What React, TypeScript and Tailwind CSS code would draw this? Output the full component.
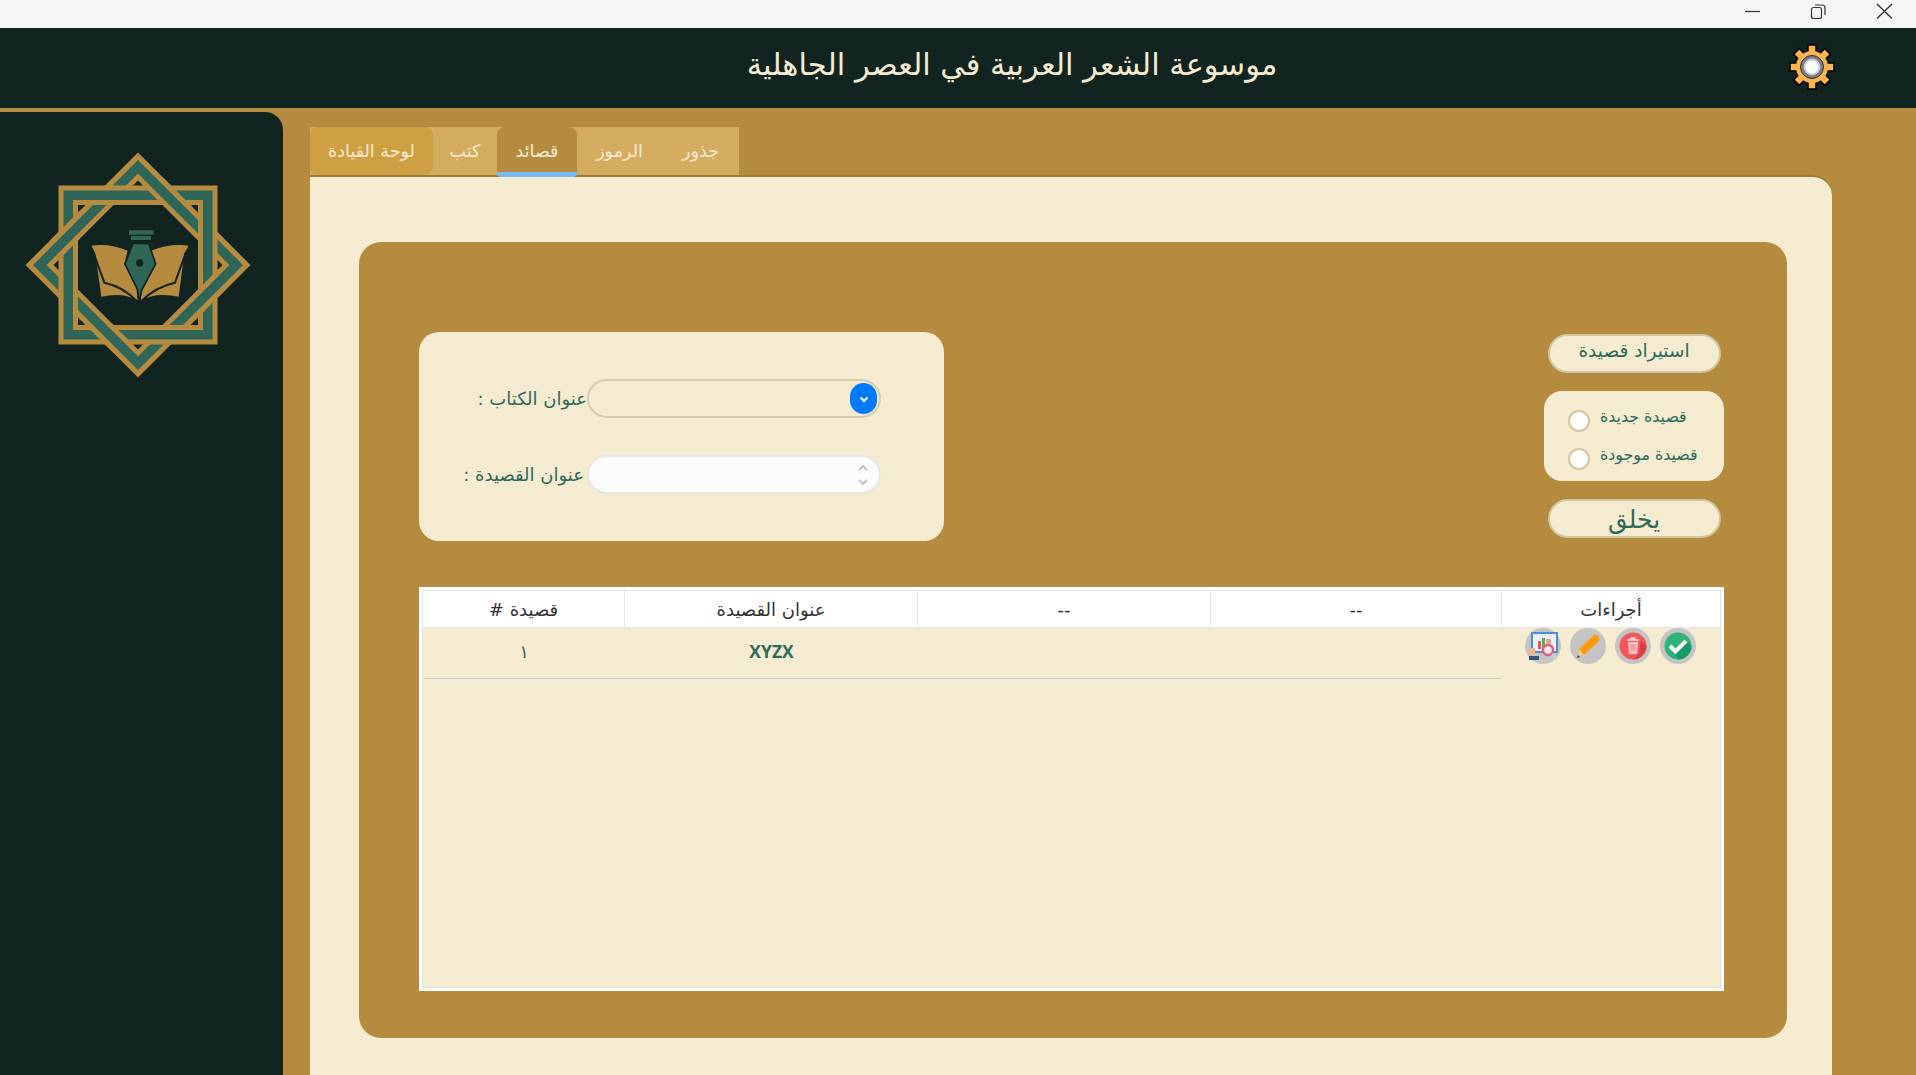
import React from "react";

const arabicFont = { fontFamily: '"DejaVu Sans", sans-serif' };

function WindowControls() {
  return (
    <div className="h-[28px] bg-[#f5f5f5] flex justify-end shrink-0">
      <svg width="176" height="28" viewBox="0 0 176 28" fill="none" stroke="#333" strokeWidth="1.2">
        <path d="M5 11.5 H20" />
        <rect x="71.5" y="7.5" width="10" height="11" rx="2" />
        <path d="M75 5 H82 Q85 5 85 8 V15" />
        <path d="M137 4 L152 18.5 M152 4 L137 18.5" strokeWidth="1.4" />
      </svg>
    </div>
  );
}

function Gear() {
  const teeth = [0, 45, 90, 135, 180, 225, 270, 315];
  return (
    <svg width="48" height="48" viewBox="-24 -24 48 48">
      {teeth.map((a) => (
        <rect key={a} x="-4" y="-22" width="8" height="12" fill="#fdb44e" stroke="#000" strokeWidth="1.5" transform={`rotate(${a})`} />
      ))}
      <circle r="16" fill="#fdb44e" />
      <circle r="11.5" fill="#777b84" stroke="#333" strokeWidth="1" />
      <circle r="8.5" fill="#c9ccd2" />
      <circle r="6.5" fill="#fff" />
    </svg>
  );
}

function Logo() {
  const gold = "#b58b40";
  const teal = "#2f6658";
  const square = (o: number, i: number) =>
    `M${-o} ${-o} H${o} V${o} H${-o} Z M${-i} ${-i} H${i} V${i} H${-i} Z`;
  const diamond = (o: number, i: number) =>
    `M0 ${-o} L${o} 0 L0 ${o} L${-o} 0 Z M0 ${-i} L${i} 0 L0 ${i} L${-i} 0 Z`;
  const Sq = () => (
    <>
      <path d={square(79.5, 60)} fill={gold} fillRule="evenodd" />
      <path d={square(74.5, 65)} fill={teal} fillRule="evenodd" />
    </>
  );
  const Di = () => (
    <>
      <path d={diamond(112.5, 84.5)} fill={gold} fillRule="evenodd" />
      <path d={diamond(105, 91.5)} fill={teal} fillRule="evenodd" />
    </>
  );
  return (
    <svg width="240" height="240" viewBox="-120 -120 240 240">
      <defs>
        <clipPath id="over">
          <rect x="4" y="-88" width="52" height="30" />
          <rect x="58" y="4" width="30" height="52" />
          <rect x="-56" y="58" width="52" height="30" />
          <rect x="-88" y="-56" width="30" height="52" />
        </clipPath>
      </defs>
      <Di />
      <Sq />
      <g clipPath="url(#over)">
        <Di />
      </g>
      <g transform="scale(0.3333) translate(-413 -525)">
        <path d="M273 467 Q330 460 382 482 L372 522 L408 590 L412 632 Q370 605 303 620 L285 490 Z" fill={gold} />
        <path d="M565 467 Q505 460 452 482 L465 522 L428 590 L420 632 Q465 605 535 620 L552 490 Z" fill={gold} />
        <path d="M280 490 L312 578 Q370 590 412 636" fill="none" stroke="#12241f" strokeWidth="6" />
        <path d="M556 490 L524 578 Q465 590 420 636" fill="none" stroke="#12241f" strokeWidth="6" />
        <rect x="386" y="421" width="74" height="13" fill={teal} />
        <rect x="392" y="438" width="60" height="12" fill={teal} />
        <path d="M398 460 H445 L466 522 L424 600 L416 640 L412 600 L374 522 Z" fill={teal} stroke="#12241f" strokeWidth="5" />
        <circle cx="418" cy="519" r="11" fill="#12241f" />
      </g>
    </svg>
  );
}

function ChartIcon() {
  return (
    <svg width="36" height="36" viewBox="0 0 36 36">
      <circle cx="18" cy="18" r="18" fill="#c4c4c4" />
      <rect x="7" y="5" width="25" height="19" fill="#e9eef3" stroke="#4a90d0" strokeWidth="2" />
      <rect x="13" y="13" width="3" height="8" fill="#e0584f" />
      <rect x="17" y="10" width="3" height="11" fill="#5aa85a" />
      <rect x="21" y="11" width="5" height="6" fill="#f0a090" />
      <path d="M4 20 H10 V27 H4 Z" fill="#f0b58a" />
      <rect x="4" y="28" width="10" height="4" fill="#2e5a78" />
      <circle cx="23" cy="22" r="5" fill="#f3e9e9" stroke="#e0607a" strokeWidth="2.5" />
      <path d="M27 26 L32 31" stroke="#c9d4dc" strokeWidth="2" />
    </svg>
  );
}

function PencilIcon() {
  return (
    <svg width="36" height="36" viewBox="0 0 36 36">
      <circle cx="18" cy="18" r="18" fill="#c4c4c4" />
      <path d="M9 21 L24 7 Q26 6 28 8 L29 10 Q30 12 29 13 L14 27 Z" fill="#fb9a0e" />
      <path d="M9 21 L14 27 L7 30 Z" fill="#e8c98c" />
      <path d="M7 30 L8 27 L10 29 Z" fill="#333" />
    </svg>
  );
}

function TrashIcon() {
  return (
    <svg width="36" height="36" viewBox="0 0 36 36">
      <circle cx="18" cy="18" r="18" fill="#c4c4c4" />
      <circle cx="18" cy="18" r="13.5" fill="#f4555a" />
      <path d="M18 31.5 A13.5 13.5 0 0 0 31.5 18 L26 12 L24 26 Z" fill="#d93f44" />
      <path d="M12 11 H24 V13 H12 Z M15.5 9 H20.5 V11 H15.5 Z" fill="#f8c4c5" />
      <path d="M13 14 H23 L22 26 H14 Z" fill="#f8c4c5" />
      <rect x="15" y="16" width="6" height="7" fill="#f4a0a3" />
    </svg>
  );
}

function CheckIcon() {
  return (
    <svg width="36" height="36" viewBox="0 0 36 36">
      <circle cx="18" cy="18" r="18" fill="#c4c4c4" />
      <circle cx="18" cy="18" r="13.5" fill="#2fb478" />
      <path d="M18 31.5 A13.5 13.5 0 0 0 31.5 18 L26 12 L14 24 Z" fill="#169a6c" />
      <path d="M10 18 L15.5 23.5 L26 13" fill="none" stroke="#fff" strokeWidth="4" />
    </svg>
  );
}

const tabs = [
  { label: "لوحة القيادة", cls: "w-[123px] h-[48px] bg-[#cfa043] rounded-lg" },
  { label: "كتب", cls: "w-[64px] h-[48px]" },
  { label: "قصائد", cls: "w-[80px] h-[50px] bg-[#b58b40] rounded-t-lg rounded-b-sm border-b-[5px] border-[#7ab8f5] pt-[3px]" },
  { label: "الرموز", cls: "w-[85px] h-[48px]" },
  { label: "جذور", cls: "w-[77px] h-[48px]" },
];

const headers = [
  { label: "قصيدة #", cls: "w-[202px]" },
  { label: "عنوان القصيدة", cls: "w-[293px]" },
  { label: "--", cls: "w-[293px]" },
  { label: "--", cls: "w-[291px]" },
  { label: "أجراءات", cls: "flex-1" },
];

export default function App() {
  return (
    <div className="h-screen w-full overflow-hidden flex flex-col bg-[#b58b40]" style={arabicFont}>
      <WindowControls />
      <header className="h-[80px] shrink-0 bg-[#12241f] flex items-center pb-[6px] pl-[236px] pr-[80px]">
        <h1 className="flex-1 text-center text-[30.5px] text-[#f5ebd0] font-normal">موسوعة الشعر العربية في العصر الجاهلية</h1>
        <div className="w-[48px] pt-[4px]">
          <Gear />
        </div>
      </header>

      <div className="flex-1 flex min-h-0">
        <aside className="w-[283px] mt-[4px] bg-[#12241f] rounded-tr-[18px] pt-[33px] pl-[18px]">
          <Logo />
        </aside>

        <main className="flex-1 flex flex-col pl-[27px] pr-[84px] pt-[19px] min-w-0">
          <nav className="relative z-10 flex h-[48px] w-[429px] items-start shrink-0 bg-[#d4ac60]">
            {tabs.map((t) => (
              <div key={t.label} className={`${t.cls} flex items-center justify-center text-[17.5px] text-[#f5ebd0]`}>
                {t.label}
              </div>
            ))}
          </nav>

          <section className="flex-1 border-t-2 border-[#a07a35] bg-[#f5ebd0] rounded-tr-[20px] pt-[65px] pl-[49px] pr-[45px] min-h-0">
            <div className="h-[796px] bg-[#b58b40] rounded-[22px] pt-[90px] pl-[60px] pr-[63px]">
              <div className="flex justify-between items-start h-[209px]">
                <div className="w-[525px] h-[209px] bg-[#f5ebd0] rounded-[20px] pt-[47px] flex flex-col gap-[37px]">
                  <div className="flex items-center">
                    <label dir="rtl" className="w-[168px] text-right text-[18px] text-[#2d6a5c]">عنوان الكتاب :</label>
                    <div className="w-[294px] h-[39px] rounded-full border-2 border-[#d8ccb0] flex items-center justify-end pr-[2px]">
                      <span className="w-[27px] h-[31px] rounded-full bg-[#007bff] flex items-center justify-center">
                        <svg width="12" height="12" viewBox="0 0 12 12" fill="none" stroke="#fff" strokeWidth="2">
                          <path d="M2.5 4.5 L6 8 L9.5 4.5" />
                        </svg>
                      </span>
                    </div>
                  </div>
                  <div className="flex items-center">
                    <label dir="rtl" className="w-[165px] mr-[3px] text-right text-[18px] text-[#2d6a5c]">عنوان القصيدة :</label>
                    <div className="w-[294px] h-[39px] rounded-full border-2 border-[#e6e6e6] bg-[#fbfbfb] flex items-center justify-end pr-[10px]">
                      <svg width="12" height="26" viewBox="0 0 12 26" fill="none" stroke="#c4c4c4" strokeWidth="2">
                        <path d="M2 8 L6 4 L10 8 M2 18 L6 22 L10 18" />
                      </svg>
                    </div>
                  </div>
                </div>

                <div className="w-[180px] pt-[2px] flex flex-col items-center">
                  <button className="w-[173px] h-[39px] rounded-full bg-[#f5ebd0] border-2 border-[#d3c5a2] text-[18.5px] text-[#2d6a5c] pb-[6px]">
                    استيراد قصيدة
                  </button>
                  <div className="w-[180px] h-[90px] mt-[18px] bg-[#f5ebd0] rounded-[18px] pt-[17px] pl-[24px] flex flex-col gap-[16px]">
                    {["قصيدة جديدة", "قصيدة موجودة"].map((label) => (
                      <div key={label} className="flex items-center gap-[10px] h-[22px]">
                        <span className="w-[22px] h-[22px] mt-[3px] rounded-full bg-white border-2 border-[#d3c5a2] shrink-0" />
                        <span className="text-[15.8px] text-[#2d6a5c] pb-[5px]">{label}</span>
                      </div>
                    ))}
                  </div>
                  <button className="w-[173px] h-[39px] mt-[18px] rounded-full bg-[#f5ebd0] border-2 border-[#d3c5a2] text-[25px] font-normal text-[#2d6a5c] pb-[8px]">
                    يخلق
                  </button>
                </div>
              </div>

              <div className="mt-[46px] h-[404px] bg-[#f5ebd0] border-[4px] border-white outline outline-1 outline-[#e2e2e2] -outline-offset-[4px]">
                <div className="flex h-[37px] bg-white border-b border-[#e6e6e6]">
                  {headers.map((h, i) => (
                    <div
                      key={i}
                      dir="rtl"
                      className={`${h.cls} flex items-center justify-center text-[18px] text-[#333] ${i < 4 ? "border-r border-[#e6e6e6]" : ""}`}
                    >
                      {h.label}
                    </div>
                  ))}
                </div>
                <div className="flex h-[51px]">
                  <div className="w-[1079px] flex border-b border-[#cfcfc8] h-[51px] pb-[4px]">
                    <div className="w-[202px] flex items-center justify-center text-[18px] text-[#2d6a5c]">١</div>
                    <div className="w-[293px] flex items-center justify-center text-[17.5px] font-bold text-[#2d6a5c]" style={{ fontFamily: '"Open Sans", sans-serif' }}>
                      XYZX
                    </div>
                  </div>
                  <div className="flex-1 flex gap-[9px] pl-[23px] pt-0">
                    <ChartIcon />
                    <PencilIcon />
                    <TrashIcon />
                    <CheckIcon />
                  </div>
                </div>
              </div>
            </div>
          </section>
        </main>
      </div>
    </div>
  );
}
